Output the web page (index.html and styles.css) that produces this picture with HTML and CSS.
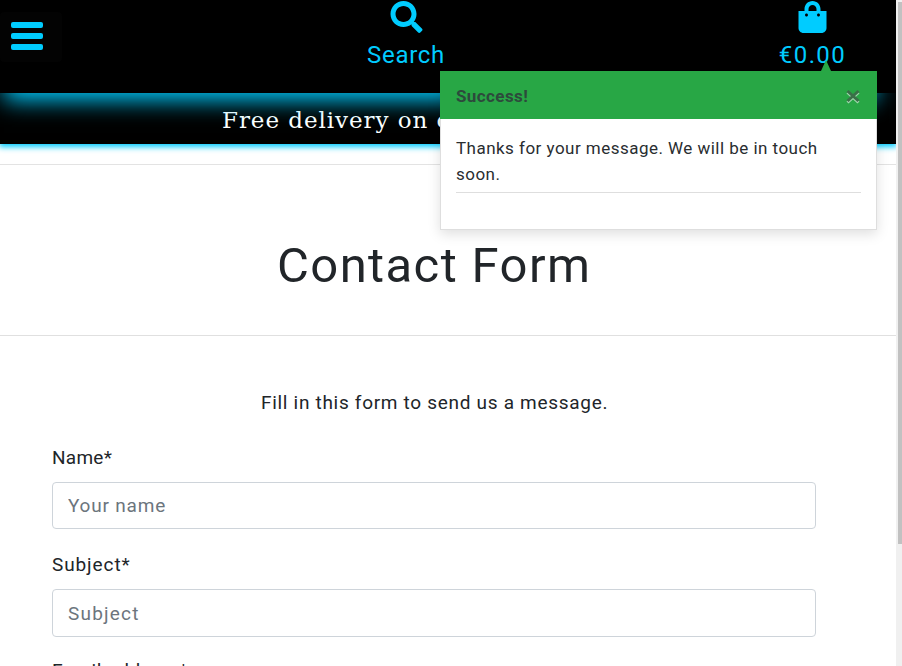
FILE: index.html
```html
<!DOCTYPE html>
<html lang="en">
<head>
<meta charset="utf-8">
<title>Contact Form</title>
<link rel="stylesheet" href="styles.css">
</head>
<body>
<div class="window">
  <div class="page">
    <header class="navbar">
      <button class="menu" aria-label="Menu"><span></span><span></span><span></span></button>
      <a class="nav-item search">
        <svg width="33" height="33" viewBox="0 0 512 512"><path fill="currentColor" d="M505 442.700L405.300 343c-4.500-4.500-10.600-7-17-7H372c27.600-35.300 44-79.700 44-128C416 93.100 322.900 0 208 0S0 93.100 0 208s93.100 208 208 208c48.300 0 92.700-16.400 128-44v16.300c0 6.400 2.500 12.500 7 17l99.700 99.700c9.400 9.400 24.600 9.400 33.900 0l28.300-28.300c9.400-9.400 9.400-24.600.1-34zM208 336c-70.700 0-128-57.200-128-128 0-70.700 57.200-128 128-128 70.700 0 128 57.200 128 128 0 70.700-57.200 128-128 128z"/></svg>
        <span class="search-label">Search</span>
      </a>
      <a class="nav-item bag">
        <svg width="29" height="33" viewBox="0 0 448 512"><path fill="currentColor" d="M352 160v-32C352 57.420 294.579 0 224 0 153.420 0 96 57.420 96 128v32H0v272c0 44.183 35.817 80 80 80h288c44.183 0 80-35.817 80-80V160h-96zm-192-32c0-35.290 28.710-64 64-64s64 28.710 64 64v32H160v-32zm160 120c-13.255 0-24-10.745-24-24s10.745-24 24-24 24 10.745 24 24-10.745 24-24 24zm-192 0c-13.255 0-24-10.745-24-24s10.745-24 24-24 24 10.745 24 24-10.745 24-24 24z"/></svg>
        <span class="price">€0.00</span>
      </a>
      <div class="toast">
        <div class="toast-header"><strong>Success!</strong>
          <svg class="close" width="16" height="16" viewBox="0 0 16 16"><path class="close-light" d="M2.500 4.500l11 10M13.500 4.500l-11 10"/><path class="close-dark" d="M2.500 3l11 10M13.500 3l-11 10"/></svg>
        </div>
        <div class="toast-body"><p>Thanks for your message. We will be in touch<br>soon.</p></div>
      </div>
    </header>
    <div class="banner"><span>Free delivery on orders over €50!</span></div>
    <div class="title"><h1>Contact Form</h1></div>
    <form class="form">
      <p class="intro">Fill in this form to send us a message.</p>
      <label class="l-name" for="name">Name*</label>
      <input class="i-name" id="name" placeholder="Your name">
      <label class="l-subject" for="subject">Subject*</label>
      <input class="i-subject" id="subject" placeholder="Subject">
      <label class="l-email">Email address*</label>
    </form>
  </div>
  <div class="scrollbar"><div class="thumb"></div></div>
</div>
</body>
</html>
```

FILE: styles.css
```css
* { box-sizing: border-box; }
html, body { margin: 0; height: 666px; overflow: hidden; }
body { font-family: Roboto, "Liberation Sans", sans-serif; color: #212529; background: #fff; }
.window { display: flex; height: 666px; overflow: hidden; }
.page { width: 896px; overflow: hidden; }
.scrollbar { width: 6px; background: #f0f0f0; padding: 2px 0 0 2px; }
.thumb { height: 542px; background: #c1c1c1; }

.navbar { position: relative; z-index: 3; isolation: isolate; height: 93px; background: #000; color: #0cf; display: grid; grid-template-columns: 367px 78px 334px 67px; align-items: start; }
.navbar::before { content: ""; position: absolute; inset: 0 16px 0 0; z-index: -2; box-shadow: 0 11px 22px -4px #0cf; }
.navbar::after { content: ""; position: absolute; inset: 0; z-index: -1; background: #000; }
.menu { background: #030303; border: 0; border-radius: 4px; margin: 12px 0 0; padding: 10px 0 0 11px; width: 62px; height: 50px; display: flex; flex-direction: column; gap: 5px; }
.menu span { display: block; width: 32px; height: 6px; border-radius: 2px; background: #0cf; }
.nav-item { display: flex; flex-direction: column; align-items: center; color: #0cf; white-space: nowrap; padding-top: 1px; }
.nav-item svg { display: block; height: 32px; }
.nav-item span { line-height: 30px; margin-top: 7px; font-size: 24px; }
.search { grid-column: 2; }
.search-label { letter-spacing: .7px; }
.bag { grid-column: 4; }
.price { letter-spacing: 1.400px; }

.banner { height: 51px; background: #000; color: #fff; padding: 11px 0 0 222px; font: 23px/32px "DejaVu Serif", serif; letter-spacing: .95px; white-space: nowrap; box-shadow: 0 2px 6px 1px #0cf; }

.toast { position: absolute; left: 440px; top: 71px; width: 437px; height: 159px; background: #fff; border: 1px solid #dedede; border-top: 0; box-shadow: 0 4px 12px rgba(0, 0, 0, .13); color: #343a40; }
.toast::before { content: ""; position: absolute; left: 380px; top: -11px; border: 5px solid transparent; border-top: 0; border-bottom: 11px solid #28a745; }
.toast-header { height: 48px; margin: 0 -1px; padding: 2px 16px 0; display: flex; align-items: center; justify-content: space-between; background: #28a745; font-size: 17px; }
.toast-header strong { color: #2d4a3c; letter-spacing: .4px; }
.close { fill: none; stroke-width: 3; }
.close-light { stroke: #a0d6ac; }
.close-dark { stroke: #3a7048; }
.toast-body { padding: 16px 15px 0; }
.toast-body p { margin: 0; height: 58px; border-bottom: 1px solid #dedede; font-size: 17px; line-height: 26px; letter-spacing: .47px; color: #292d30; white-space: nowrap; }

.title { margin-top: 20px; height: 172px; border-top: 1px solid #e3e3e3; border-bottom: 1px solid #e0e0e0; padding-top: 70px; }
.title h1 { margin: 0 0 0 277px; font-size: 49px; line-height: 62px; font-weight: 400; letter-spacing: 1.400px; white-space: nowrap; }

.form { padding: 52px 80px 0 52px; display: flex; flex-direction: column; font-size: 19px; }
.intro { margin: 0 0 0 209px; line-height: 30px; letter-spacing: .7px; white-space: nowrap; }
.form label { line-height: 28px; letter-spacing: .25px; }
.l-name { margin-top: 26px; }
.form input { font: inherit; letter-spacing: .8px; border: 1px solid #ced4da; border-radius: 4px; padding: 0 15px; height: 47px; margin-top: 10px; width: 764px; outline: 0; background: #fff; }
.form input::placeholder { color: #6c757d; opacity: 1; }
.form .l-subject { margin-top: 22px; letter-spacing: .9px; }
.form .i-subject { height: 48px; letter-spacing: 1.200px; }
.form .l-email { margin-top: 20px; letter-spacing: .6px; }
```
